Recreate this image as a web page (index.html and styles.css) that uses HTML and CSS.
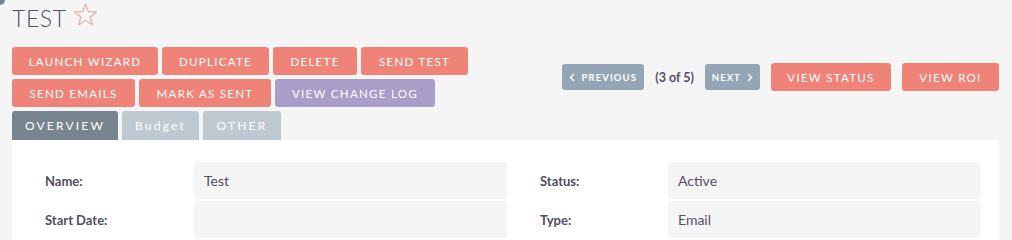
FILE: index.html
```html
<!DOCTYPE html>
<html lang="en">
<head>
    <meta charset="UTF-8">
    <meta name="viewport" content="width=device-width, initial-scale=1.0">
    <title>Campaign - TEST</title>
    <link rel="stylesheet" href="styles.css">
</head>
<body>
    <span class="corner-dot"></span>
    <div class="page">
        <h2 class="title">
            <span>TEST</span>
            <svg class="star" width="25" height="23" viewBox="0 0 25 23">
                <polygon points="12.5,1 15.4,8.6 23.5,8.9 17.2,14 19.4,21.9 12.5,17.4 5.6,21.9 7.8,14 1.5,8.9 9.6,8.6" fill="none" stroke="#f4a39a" stroke-width="1.1" stroke-linejoin="round"/>
            </svg>
        </h2>

        <div class="action-bar">
            <div class="actions">
                <div class="btn-row">
                    <button class="btn w-launch">Launch Wizard</button>
                    <button class="btn w-dup">Duplicate</button>
                    <button class="btn w-del">Delete</button>
                    <button class="btn w-test">Send Test</button>
                </div>
                <div class="btn-row">
                    <button class="btn w-emails">Send Emails</button>
                    <button class="btn w-mark">Mark as Sent</button>
                    <button class="btn btn-purple w-log">View Change Log</button>
                </div>
            </div>
            <div class="nav">
                <button class="nav-btn w-prev">
                    <svg width="6" height="9" viewBox="0 0 6 9"><polyline points="5,1 1.5,4.5 5,8" fill="none" stroke="#fff" stroke-width="1.4"/></svg>
                    Previous
                </button>
                <span class="counter">(3 of 5)</span>
                <button class="nav-btn w-next">
                    Next
                    <svg width="6" height="9" viewBox="0 0 6 9"><polyline points="1,1 4.5,4.5 1,8" fill="none" stroke="#fff" stroke-width="1.4"/></svg>
                </button>
                <button class="btn btn-tall w-status">View Status</button>
                <button class="btn btn-tall w-roi">View ROI</button>
            </div>
        </div>

        <div class="tabs">
            <div class="tab active w-overview">OVERVIEW</div>
            <div class="tab w-budget">Budget</div>
            <div class="tab w-other">OTHER</div>
        </div>

        <div class="panel">
            <div class="field-grid">
                <div class="label">Name:</div>
                <div class="value">Test</div>
                <div class="label label-right">Status:</div>
                <div class="value">Active</div>

                <div class="label">Start Date:</div>
                <div class="value"></div>
                <div class="label label-right">Type:</div>
                <div class="value">Email</div>
            </div>
        </div>
    </div>
</body>
</html>
```

FILE: styles.css
```css
body {
    margin: 0;
    background-color: #f5f5f5;
    font-family: Lato, "Open Sans", sans-serif;
    color: #534d64;
    overflow: hidden;
}
.corner-dot {
    position: absolute;
    left: -5px;
    top: -5px;
    width: 10px;
    height: 10px;
    border-radius: 50%;
    background-color: #778591;
}
.page {
    padding: 0 13px 0 12px;
}
.title {
    display: flex;
    align-items: center;
    gap: 6px;
    margin: 0;
    padding-top: 3px;
    height: 30px;
    font-size: 23px;
    font-weight: 300;
    line-height: 30px;
    letter-spacing: 0.6px;
}
.star {
    margin-top: -8px;
}
.action-bar {
    display: flex;
    justify-content: space-between;
    align-items: center;
    margin-top: 14px;
}
.actions {
    display: flex;
    flex-direction: column;
    gap: 4px;
}
.btn-row {
    display: flex;
    gap: 4px;
}
.btn {
    height: 28px;
    padding: 0;
    border: none;
    border-radius: 3px;
    background-color: #f08377;
    color: #fff;
    font-family: Lato, "Open Sans", sans-serif;
    font-size: 11.5px;
    letter-spacing: 1.3px;
    text-transform: uppercase;
    cursor: pointer;
}
.btn-purple {
    background-color: #a99dca;
}
.w-launch { width: 146px; }
.w-dup { width: 107px; }
.w-del { width: 84px; }
.w-test { width: 107px; }
.w-emails { width: 123px; }
.w-mark { width: 132px; }
.w-log { width: 160px; }
.w-status { width: 120px; }
.w-roi { width: 97px; }

.nav {
    display: flex;
    align-items: center;
    gap: 11px;
}
.nav-btn {
    display: flex;
    align-items: center;
    justify-content: center;
    gap: 6px;
    height: 26px;
    padding: 0;
    border: none;
    border-radius: 3px;
    background-color: #94a6b5;
    color: #fff;
    font-family: Lato, "Open Sans", sans-serif;
    font-size: 9.5px;
    font-weight: 700;
    letter-spacing: 1.1px;
    text-transform: uppercase;
}
.w-prev { width: 82px; }
.w-next { width: 55px; }
.counter {
    font-size: 12.5px;
    font-weight: 700;
    color: #534d64;
}
.btn-tall {
    height: 28px;
}

.tabs {
    display: flex;
    gap: 4px;
    margin-top: 4px;
}
.tab {
    height: 29px;
    line-height: 29px;
    border-radius: 3px 3px 0 0;
    background-color: #bec9d1;
    color: #fff;
    font-size: 12px;
    letter-spacing: 2.2px;
    text-align: center;
}
.tab.active {
    background-color: #778591;
}
.w-overview { width: 106px; }
.w-budget { width: 77px; }
.w-other { width: 78px; }

.panel {
    background-color: #fff;
    border-radius: 0 4px 0 0;
    padding: 22px 25px 20px 33px;
}
.field-grid {
    display: grid;
    grid-template-columns: 149px 313px 161px 313px;
    row-gap: 2px;
}
.label {
    display: flex;
    align-items: center;
    height: 37px;
    font-size: 13px;
    font-weight: 700;
}
.label-right {
    padding-left: 33px;
}
.value {
    display: flex;
    align-items: center;
    height: 37px;
    padding-left: 10px;
    border-radius: 4px;
    background-color: #f5f5f5;
    font-size: 14px;
}
```
